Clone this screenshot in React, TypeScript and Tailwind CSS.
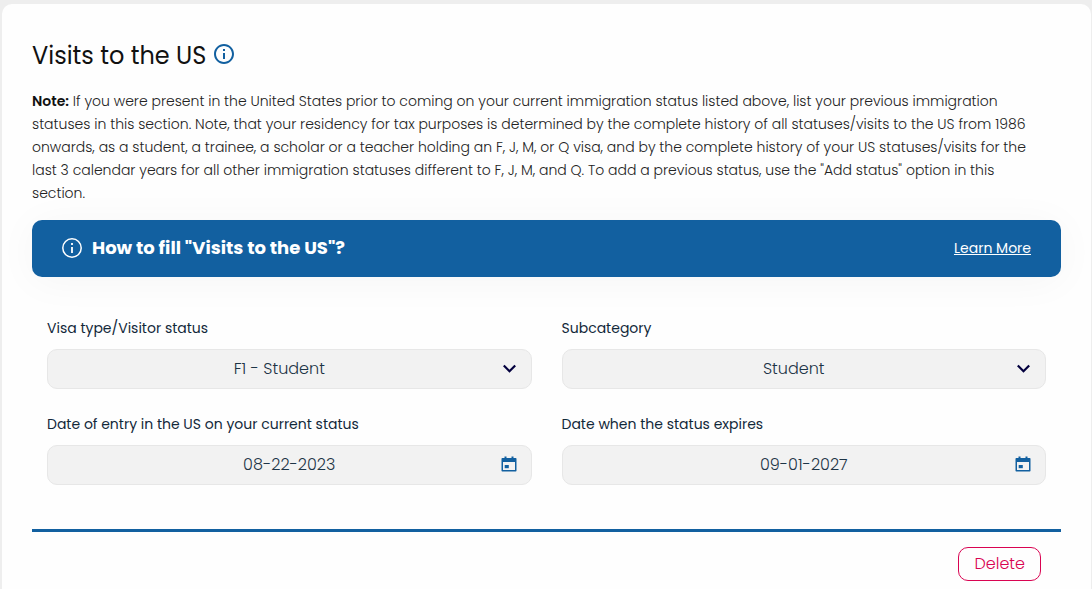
import type { ReactNode } from "react";
import { MdInfoOutline } from "react-icons/md";

function CalendarIcon() {
  return (
    <svg
      viewBox="0 0 16 16"
      className="pointer-events-none absolute top-[11px] right-[15px] size-4"
      fill="#1260a0"
      aria-hidden="true"
    >
      <path d="M3.5 0.5h2V2h5V0.5h2V2h2.2c.5 0 .8.3.8.8v11.9c0 .5-.3.8-.8.8H1.3c-.5 0-.8-.3-.8-.8V2.8c0-.5.3-.8.8-.8h2.2zM2 6v8h12V6z" />
      <path d="M3.7 9h4.1v3.2H3.7z" />
    </svg>
  );
}

function ThinInfoIcon() {
  return (
    <svg viewBox="0 0 24 24" className="size-6" fill="none" stroke="currentColor" aria-hidden="true">
      <circle cx="12" cy="12" r="9.2" strokeWidth="1.5" />
      <path d="M12 7v2M12 11v6" strokeWidth="1.8" />
    </svg>
  );
}

function Field({ id, label, children }: { id: string; label: string; children: ReactNode }) {
  return (
    <div>
      <label htmlFor={id} className="block text-sm leading-6 text-[#12283a]">
        {label}
      </label>
      <div className="relative mt-[9px]">{children}</div>
    </div>
  );
}

function SelectField({ id, label, value }: { id: string; label: string; value: string }) {
  return (
    <Field id={id} label={label}>
      <select
        id={id}
        defaultValue={value}
        className="block h-10 w-full appearance-none rounded-[10px] border border-[#e7e7e7] bg-[#f2f2f2] pr-6 pl-1 text-center text-base font-light text-[#1d3446] [text-align-last:center]"
      >
        <option>{value}</option>
      </select>
      <svg
        viewBox="0 0 14 10"
        className="pointer-events-none absolute top-[15px] right-[15px] h-[10px] w-[14px]"
        fill="none"
        stroke="#03003e"
        strokeWidth="2.2"
        aria-hidden="true"
      >
        <path d="M0.8 1.5 6.5 7.3 12.2 1.5" />
      </svg>
    </Field>
  );
}

function DateField({ id, label, value }: { id: string; label: string; value: string }) {
  return (
    <Field id={id} label={label}>
      <input
        id={id}
        type="text"
        defaultValue={value}
        className="block h-10 w-full rounded-[10px] border border-[#e7e7e7] bg-[#f2f2f2] pb-0.5 text-center text-base font-light text-[#1d3446]"
      />
      <CalendarIcon />
    </Field>
  );
}

export default function App() {
  return (
    <div className="flex min-h-screen flex-col bg-[#eeeeee] pt-1 pr-px pl-0.5 font-['Poppins','Inter',sans-serif]">
      <main className="grow rounded-t-[10px] bg-[#fefefe] px-[30px] pt-8 pb-2">
        <h1 className="flex items-start gap-1.5 text-2xl leading-10 text-[#111111]">
          Visits to the US
          <MdInfoOutline className="mt-1.5 size-6 text-[#1260a0]" aria-hidden="true" />
        </h1>

        <p className="mt-[14px] pr-5 text-sm leading-[23px] font-light text-[#222222]">
          <strong className="font-semibold text-[#111111]">Note:</strong> If you were present in the
          United States prior to coming on your current immigration status listed above, list your
          previous immigration statuses in this section. Note, that your residency for tax purposes
          is determined by the complete history of all statuses/visits to the US from 1986 onwards,
          as a student, a trainee, a scholar or a teacher holding an F, J, M, or Q visa, and by the
          complete history of your US statuses/visits for the last 3 calendar years for all other
          immigration statuses different to F, J, M, and Q. To add a previous status, use the "Add
          status" option in this section.
        </p>

        <section className="mt-[15px] flex h-[57px] items-center justify-between rounded-[10px] bg-[#1260a0] pr-[30px] pb-0.5 pl-7 text-white shadow-[0_4px_40px_rgba(0,0,0,0.04)]">
          <h2 className="flex items-center gap-2 text-lg font-bold">
            <ThinInfoIcon />
            How to fill "Visits to the US"?
          </h2>
          <a href="#learn-more" className="text-sm underline">
            Learn More
          </a>
        </section>

        <form className="mt-[39px]">
          <div className="grid grid-cols-2 gap-x-[30px] gap-y-[23px] px-[15px]">
            <SelectField id="visa" label="Visa type/Visitor status" value="F1 - Student" />
            <SelectField id="subcategory" label="Subcategory" value="Student" />
            <DateField
              id="entry"
              label="Date of entry in the US on your current status"
              value="08-22-2023"
            />
            <DateField id="expiry" label="Date when the status expires" value="09-01-2027" />
          </div>
          <div className="mt-11 flex justify-end border-t-3 border-[#1260a0] pt-[15px] pr-5">
            <button
              type="button"
              className="h-[34px] rounded-[10px] border border-[#d90452] px-[15px] text-base font-light text-[#d90452]"
            >
              Delete
            </button>
          </div>
        </form>
      </main>
    </div>
  );
}
